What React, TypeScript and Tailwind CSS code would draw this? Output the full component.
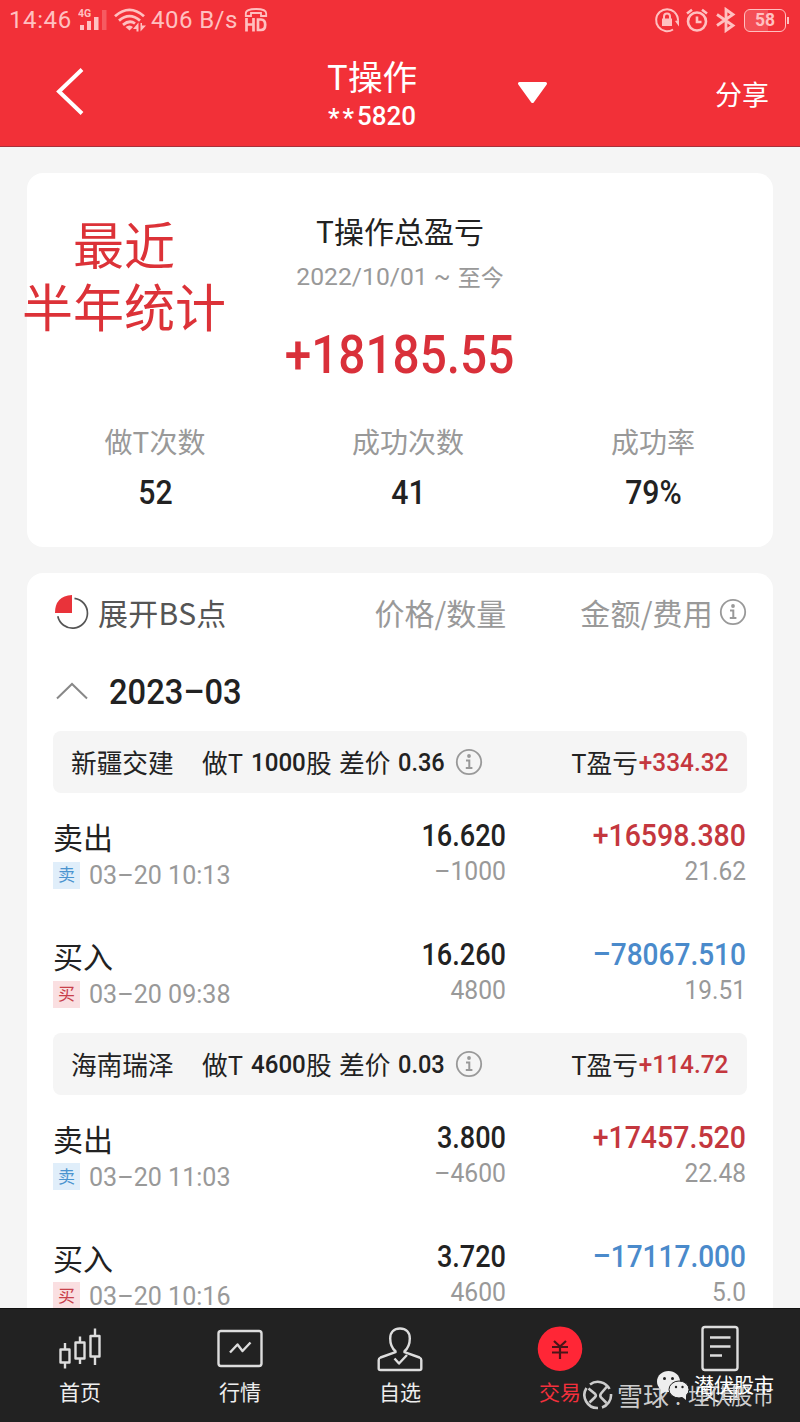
import React from "react";

const NUM = "font-['Roboto','Noto_Sans_CJK_SC',sans-serif]";

function Info({ className = "" }: { className?: string }) {
  return (
    <svg className={className} width="28" height="28" viewBox="0 0 28 28" fill="none" stroke="#999" strokeWidth="1.8">
      <circle cx="14" cy="14" r="12.2" />
      <circle cx="14" cy="8" r="1.9" fill="#999" stroke="none" />
      <path d="M11 12.5H14.3V19.5M10.8 20H17.4" strokeWidth="2" />
    </svg>
  );
}

function StatusBar() {
  return (
    <div className={`flex h-10 items-center text-[#ffc0c0] ${NUM}`}>
      <span className="ml-[9px] w-[69px] text-[24px] leading-10 tracking-[0.6px]">14:46</span>
      <svg width="30" height="24" viewBox="0 0 30 24" fill="currentColor">
        <text x="0" y="9" fontSize="10.5" fontWeight="700">4G</text>
        <rect x="2" y="17" width="4" height="5" />
        <rect x="9" y="13" width="4" height="9" />
        <rect x="16" y="9" width="4.5" height="13" />
        <rect x="24" y="2" width="4.5" height="20" opacity=".3" />
      </svg>
      <svg className="ml-[5px]" width="34" height="26" viewBox="0 0 34 26" fill="none" stroke="currentColor" strokeWidth="2.8">
        <path d="M2 9.200Q16.500 -3.500 31 9.200M6 13.600Q16.500 4.600 27 13.600M10 17.800Q16.500 12.400 22 16.500" />
        <path d="M12.500 20Q16.500 17 20 20L16.500 23.500Z" fill="currentColor" stroke="none" />
        <path d="M25.500 15.500V24.500H23.500V22H20ZM27.500 24.500V16H29V18.500H33Z" fill="currentColor" stroke="none" />
      </svg>
      <span className="ml-[4px] w-[88px] whitespace-nowrap text-[24px] leading-10 tracking-[0.45px]">406 B/s</span>
      <svg className="ml-[5px]" width="24" height="26" viewBox="0 0 24 26" fill="none" stroke="currentColor">
        <path d="M1.800 9V6.500Q1.800 2 12 2T22.200 6.500V9H17V6H7V9Z" strokeWidth="1.800" />
        <path d="M2.500 11V24.500M9.500 11V24.500M2.500 17.500H9.500M14 12.500V23H17Q21.200 23 21.200 17.800T17 12.500Z" strokeWidth="2.700" />
      </svg>
      <div className="ml-auto mr-[11px] flex items-center">
        <svg width="26" height="26" viewBox="0 0 26 26" fill="none" stroke="currentColor" strokeWidth="2">
          <path d="M20.500 5A11 11 0 1 0 19 22.500M20.500 5.200Q24 8.500 24 13.500" />
          <path d="M21 14L25 13V19.500Z" fill="currentColor" stroke="none" />
          <rect x="8" y="11.500" width="10" height="7.500" fill="currentColor" stroke="none" />
          <path d="M10 12V9.500A3 3 0 0 1 16 9.500V12" />
        </svg>
        <svg className="ml-[5px]" width="24" height="26" viewBox="0 0 24 26" fill="none" stroke="currentColor" strokeWidth="2.600">
          <circle cx="12" cy="14.500" r="9" />
          <path d="M12 9.500V15H16.500M2 6.500L7 2.800M22 6.500L17 2.800" />
        </svg>
        <svg className="ml-[6px]" width="22" height="26" viewBox="0 0 22 26" fill="none" stroke="currentColor" strokeWidth="2.800">
          <path d="M2 7.500L18 18.500 11 23.500V2.500L18 7.500 2 18.500" />
        </svg>
        <div className="ml-[7px] flex h-[23px] w-[42px] items-center justify-center rounded-[6px] border-[1.500px] border-[#ffc0c0] bg-linear-to-r from-white/15 from-58% to-transparent to-58%">
          <span className="pt-px text-[17.500px] font-bold leading-none">58</span>
        </div>
        <div className="ml-[1px] h-[7px] w-[2px] bg-[#ffc0c0]" />
      </div>
    </div>
  );
}

function Header() {
  return (
    <header className="h-[147px] border-b border-[#a8303a] bg-[#f23038] text-white">
      <StatusBar />
      <div className="grid h-[106px] grid-cols-[327px_90px_100px_1fr]">
        <svg className="ml-[54px] mt-[26px]" width="32" height="52" viewBox="0 0 32 52" fill="none" stroke="#fff" strokeWidth="4">
          <path d="M28 3.500L5 25.500 28 47.500" />
        </svg>
        <div className="flex flex-col items-center">
          <div className="mt-[16px] h-10 whitespace-nowrap text-[34px] leading-10">
            <span className="inline-block origin-center scale-x-[1.02]">T操作</span>
          </div>
          <div className={`mt-[1px] flex h-[38px] whitespace-nowrap text-[26px] font-medium leading-[38px] ${NUM}`}>
            <span className="relative top-[2px] tracking-[3px]">**</span>
            <span>5820</span>
          </div>
        </div>
        <svg className="ml-[99px] mt-[40px]" width="34" height="26" viewBox="0 0 34 26">
          <path d="M3.500 3.500H29.500L16.500 21.500Z" fill="#fff" stroke="#fff" strokeWidth="3" strokeLinejoin="round" />
        </svg>
        <span className="mr-[31px] mt-[34px] text-right text-[27px] leading-10">分享</span>
      </div>
    </header>
  );
}

function Stat({ label, value }: { label: string; value: string }) {
  return (
    <div className="flex flex-col items-center">
      <span className="h-[40px] text-[28px] leading-[40px] text-[#999]">{label}</span>
      <span className={`mt-[12px] h-[40px] origin-center scale-x-[.93] text-[32.500px] font-medium leading-[40px] text-[#222] ${NUM}`}>{value}</span>
    </div>
  );
}

function Summary() {
  return (
    <section className="relative mx-[27px] mt-[26px] flex h-[374px] flex-col items-center rounded-2xl bg-white">
      <h1 className="mt-[37px] h-[40px] text-[30px] leading-[40px] text-[#222]">T操作总盈亏</h1>
      <div className="mt-[9px] flex h-[36px] items-center whitespace-nowrap text-[#999]">
        <span className={`text-[24.700px] ${NUM}`}>2022/10/01 ~</span>
        <span className="relative top-[-1px] ml-[7px] text-[23px]">至今</span>
      </div>
      <div className={`mt-[30px] h-[60px] origin-center scale-x-[.9] whitespace-nowrap text-[53px] font-medium leading-[60px] text-[#d9303a] ${NUM}`}>+18185.55</div>
      <div className="mt-[36px] grid w-full grid-cols-[256px_250px_240px]">
        <Stat label="做T次数" value="52" />
        <Stat label="成功次数" value="41" />
        <Stat label="成功率" value="79%" />
      </div>
      <div className="absolute left-[-5px] top-[39px] w-[204px] whitespace-nowrap text-center text-[51px] leading-[62px] text-[#dc3238]">
        <div>最近</div>
        <div>半年统计</div>
      </div>
    </section>
  );
}

type TradeData = { side: "卖" | "买"; name: string; time: string; price: string; qty: string; amount: string; fee: string };

function Trade({ side, name, time, price, qty, amount, fee }: TradeData) {
  const sell = side === "卖";
  return (
    <div className="grid h-[119px] grid-cols-[227px_226px_240px]">
      <div className="pt-[20px]">
        <div className="h-[46px] text-[30px] leading-[46px] text-[#222]">{name}</div>
        <div className="mt-[3px] flex h-[26px] items-center">
          <span className={`flex size-[27px] items-center justify-center pb-[3px] text-[17px] leading-none ${sell ? "bg-[#e0eefa] text-[#4b94cf]" : "bg-[#fadfe1] text-[#c8414b]"}`}>{side}</span>
          <span className={`ml-[9px] origin-left scale-x-[.965] whitespace-nowrap text-[26px] leading-[26px] text-[#999] ${NUM}`}>{time}</span>
        </div>
      </div>
      <div className={`pt-[23px] text-right ${NUM}`}>
        <div className="h-[40px] origin-right scale-x-[.86] text-[31.500px] font-medium leading-[40px] text-[#222]">{price}</div>
        <div className="h-[30px] origin-right scale-x-[.95] text-[26px] leading-[30px] text-[#999]">{qty}</div>
      </div>
      <div className={`pt-[23px] text-right ${NUM}`}>
        <div className={`h-[40px] origin-right text-[31.500px] font-medium leading-[40px] ${sell ? "scale-x-[.905] text-[#c4373e]" : "scale-x-[.89] text-[#4a8acb]"}`}>{amount}</div>
        <div className="h-[30px] origin-right scale-x-[.94] text-[26px] leading-[30px] text-[#999]">{fee}</div>
      </div>
    </div>
  );
}

function Group({ stock, shares, diff, profit, trades }: { stock: string; shares: string; diff: string; profit: string; trades: TradeData[] }) {
  return (
    <div>
      <div className="flex h-[62px] items-center whitespace-nowrap rounded-lg bg-[#f5f5f5] pl-[18px] pr-[19px] text-[25.700px] leading-[40px] text-[#222]">
        <span className="w-[131px]">{stock}</span>
        <span className="w-[49px]">做T</span>
        <span className={`w-[55px] ${NUM}`}><span className="inline-block origin-left scale-x-[.91] text-[26.500px] font-medium">{shares}</span></span>
        <span className="w-[33px]">股</span>
        <span className="w-[59px]">差价</span>
        <span className={`w-[57px] ${NUM}`}><span className="inline-block origin-left scale-x-[.89] text-[26.500px] font-medium">{diff}</span></span>
        <Info />
        <span className="ml-auto">T盈亏</span>
        <span className={`flex w-[90px] justify-end text-[#c4373e] ${NUM}`}><span className="inline-block origin-right scale-x-[.92] text-[26.500px] font-medium">{profit}</span></span>
      </div>
      {trades.map((t) => <Trade key={t.time} {...t} />)}
    </div>
  );
}

function Trades() {
  return (
    <section className="mx-[27px] mt-[26px] flex-1 rounded-t-2xl bg-white pl-[26px] pr-[26px]">
      <div className="flex h-[79px] items-center text-[30px] leading-[40px] text-[#999]">
        <svg className="mb-[2px]" width="36" height="36" viewBox="0 0 36 36" fill="none">
          <path d="M19 1V19H2Q2 2 19 1Z" fill="#e9333a" />
          <path d="M21.500 4.300A15 15 0 1 1 4.800 22.300" stroke="#555" strokeWidth="1.700" />
        </svg>
        <span className="mb-[2px] ml-[9px] tracking-[0.3px] text-[#555]">展开BS点</span>
        <span className="mb-[2px] ml-auto">价格/数量</span>
        <span className="mb-[2px] ml-[74px] tracking-[0.2px]">金额/费用</span>
        <Info className="mb-[2px] ml-[6px]" />
      </div>
      <div className="flex h-[79px] items-center">
        <svg className="mb-[2px] ml-[3px]" width="32" height="22" viewBox="0 0 32 22" fill="none" stroke="#888" strokeWidth="2">
          <path d="M1 18.500L16 4 31 18.500" />
        </svg>
        <span className={`ml-[21px] mt-[4px] origin-left scale-x-[.935] text-[35px] font-medium text-[#222] ${NUM}`}>2023–03</span>
      </div>
      <Group stock="新疆交建" shares="1000" diff="0.36" profit="+334.32" trades={[
        { side: "卖", name: "卖出", time: "03–20 10:13", price: "16.620", qty: "–1000", amount: "+16598.380", fee: "21.62" },
        { side: "买", name: "买入", time: "03–20 09:38", price: "16.260", qty: "4800", amount: "–78067.510", fee: "19.51" },
      ]} />
      <div className="h-[1.500px]" />
      <Group stock="海南瑞泽" shares="4600" diff="0.03" profit="+114.72" trades={[
        { side: "卖", name: "卖出", time: "03–20 11:03", price: "3.800", qty: "–4600", amount: "+17457.520", fee: "22.48" },
        { side: "买", name: "买入", time: "03–20 10:16", price: "3.720", qty: "4600", amount: "–17117.000", fee: "5.0" },
      ]} />
    </section>
  );
}

function Tab({ label, active, children }: { label: string; active?: boolean; children: React.ReactNode }) {
  return (
    <div className="flex flex-1 flex-col items-center pt-[14px]">
      <svg width="50" height="50" viewBox="0 0 50 50" fill="none" stroke="#ddd" strokeWidth="2.400" strokeLinejoin="round">{children}</svg>
      <span className={`mt-[3px] h-[30px] text-[21px] leading-[30px] ${active ? "text-[#f2303c]" : "text-[#eee]"}`}>{label}</span>
    </div>
  );
}

function TabBar() {
  return (
    <nav className="relative flex h-[114px] shrink-0 border-t border-[#111] bg-[#222]">
      <Tab label="首页">
        <path d="M5.500 26.500H14.500V39.500H5.500ZM10 20V26.500M10 39.500V45.500M20.500 19.500H29.500V35.500H20.500ZM25 13.500V19.500M25 35.500V41M35.500 13H44.500V33.500H35.500ZM40 5.500V13M40 33.500V42" />
      </Tab>
      <Tab label="行情">
        <rect x="3.500" y="8" width="43" height="35" rx="2.500" />
        <path d="M15 29.500L22.500 21.500 27.500 28 35.500 19.500" />
      </Tab>
      <Tab label="自选">
        <path d="M20.500 28.200C16 24.500 15.200 20.500 15.200 15.500C15.200 9 19 5.500 25 5.500S34.800 9 34.800 15.500C34.800 20.500 34 24.500 29.500 28.200V29.200L44.500 34.500Q46.300 35.200 46.300 37V45.500Q46.300 47 44.500 47H5.500Q3.700 47 3.700 45.500V37Q3.700 35.200 5.500 34.500L20.500 29.200Z" />
        <path d="M19.500 35.500L24 40.500 32 32" />
      </Tab>
      <Tab label="交易" active>
        <circle cx="25" cy="25.700" r="22.300" fill="#ff2636" stroke="none" />
        <path d="M19 18L25 23.500 31 18M17 24H33M17 29.500H33M25 23V36" stroke="#4a1418" strokeWidth="2.200" />
      </Tab>
      <Tab label="文章">
        <rect x="7.500" y="4" width="35" height="43" rx="2.500" />
        <path d="M15 14.500H35.500M15 23.500H35.500M15 32.500H27" />
      </Tab>
      <Watermark />
    </nav>
  );
}

function Watermark() {
  return (
    <>
      <div className="absolute left-[583px] top-[70px] flex h-[32px] items-center whitespace-nowrap text-[#ccc]">
        <svg width="30" height="32" viewBox="0 0 30 32" fill="none" stroke="#ccc" strokeWidth="2.600">
          <path d="M7 5.500A13 13 0 0 1 26.500 10M28 15A13 13 0 0 1 19 28.500M15 29A13 13 0 0 1 3.500 9" />
          <path d="M5.500 9.500L12.200 15Q13.500 16.500 12.200 18L6.500 23.500M24 7.500L18 14.500Q16.500 16.500 18 18.500L23.500 24" />
        </svg>
        <span className="ml-[4px] text-[26px] leading-[32px]">雪球</span>
        <span className="ml-[6px] w-[12px] text-[22px] leading-[32px]">:</span>
        <span className="ml-[1px] text-[21.500px] leading-[32px]">埋伏股市</span>
      </div>
      <div className="absolute left-[656px] top-[60px] flex h-[32px] items-center whitespace-nowrap text-white">
        <svg width="34" height="32" viewBox="0 0 34 32" fill="#eee">
          <ellipse cx="12.500" cy="12.500" rx="11.500" ry="10.500" />
          <path d="M5 19L4.500 25.500 11 22Z" />
          <ellipse cx="23" cy="20.500" rx="10" ry="8.500" stroke="#222" />
          <path d="M25 27L30 31 30 25Z" />
          <g fill="#222"><circle cx="8.500" cy="9.500" r="1.500" /><circle cx="16.500" cy="9.500" r="1.500" /><circle cx="20" cy="18" r="1.200" /><circle cx="26.500" cy="18" r="1.200" /></g>
        </svg>
        <span className="ml-[4px] text-[20px] leading-[32px]">潜伏股市</span>
      </div>
    </>
  );
}

export default function App() {
  return (
    <div className="flex h-[1422px] w-[800px] flex-col overflow-hidden bg-[#f5f5f5] font-['Noto_Sans_CJK_SC',sans-serif]">
      <div className="flex min-h-0 flex-1 flex-col overflow-hidden">
        <div className="shrink-0"><Header /></div>
        <div className="shrink-0"><Summary /></div>
        <Trades />
      </div>
      <TabBar />
    </div>
  );
}
